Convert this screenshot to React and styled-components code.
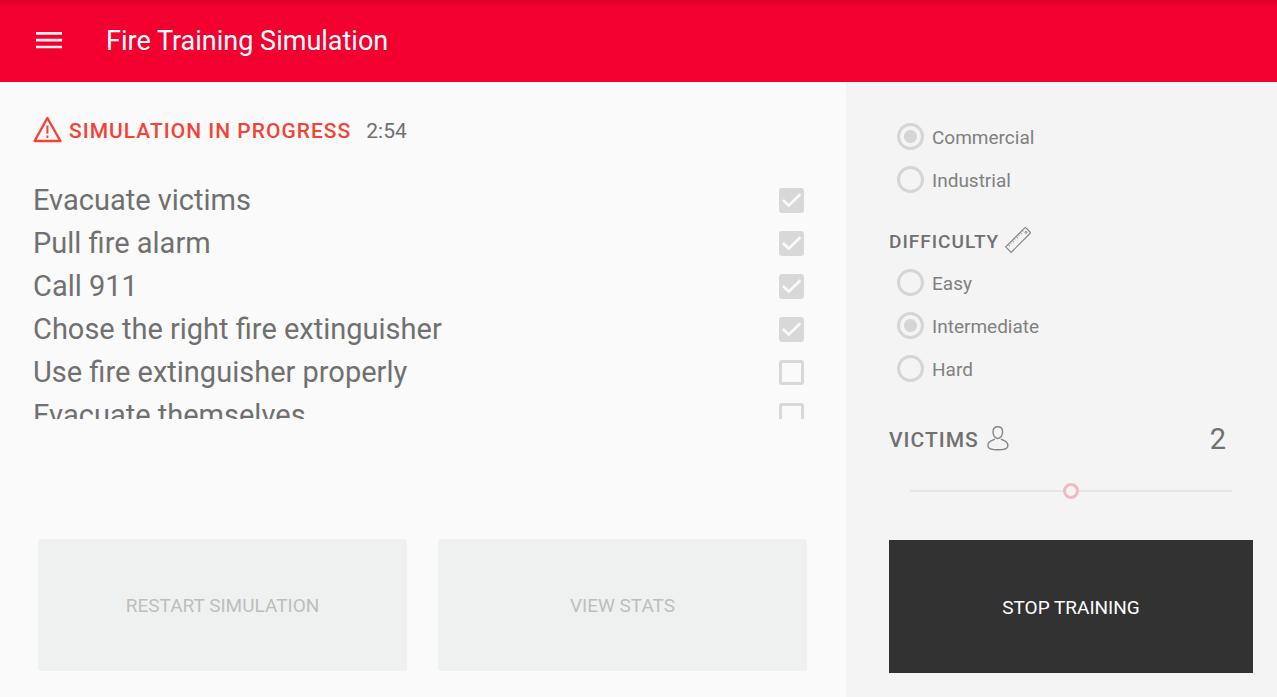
import React from "react";
import styled, { createGlobalStyle, css } from "styled-components";

const GlobalStyle = createGlobalStyle`
  *, *::before, *::after { box-sizing: border-box; }
  body {
    margin: 0;
    background: #fafafa;
    color: #707070;
    font-family: Roboto, "Liberation Sans", sans-serif;
  }
  button, input { font: inherit; margin: 0; }
`;

const Page = styled.div`
  display: flex;
  flex-direction: column;
  height: 100vh;
`;

const TopBar = styled.header`
  display: flex;
  align-items: center;
  flex: none;
  gap: 44px;
  height: 82px;
  padding: 0 36px;
  background: linear-gradient(#dc002b, #f2002f 6px);
  color: #fff;
`;

const MenuButton = styled.button`
  display: flex;
  padding: 0;
  border: 0;
  background: none;
  color: inherit;
  cursor: pointer;
`;

const Title = styled.h1`
  margin: 0;
  font-size: 27px;
  font-weight: 400;
  line-height: 32px;
`;

const Body = styled.div`
  display: flex;
  flex: 1;
  min-height: 0;
`;

const Main = styled.main`
  display: flex;
  flex-direction: column;
  flex: 1;
  min-width: 0;
  padding: 32px 39px 26px 33px;
`;

const Status = styled.div`
  display: flex;
  align-items: center;
  flex: none;
  height: 34px;
`;

const StatusText = styled.h2`
  margin: 0 15px 0 7px;
  color: #f44336;
  font-size: 21px;
  font-weight: 500;
  line-height: 32px;
  letter-spacing: 1px;
`;

const Timer = styled.span`
  font-size: 21px;
  line-height: 32px;
`;

const TaskList = styled.ul`
  flex: 1;
  min-height: 0;
  margin: 31px 0 120px;
  padding: 0 3px 0 0;
  list-style: none;
  overflow-y: auto;
  scrollbar-width: none;
`;

const TaskRow = styled.li`
  label {
    display: flex;
    align-items: center;
    justify-content: space-between;
    height: 43px;
    font-size: 29px;
    line-height: 43px;
  }
`;

const TickBox = styled.span`
  display: grid;
  width: 25px;
  height: 25px;
  svg { grid-area: 1 / 1; }
`;

const TickInput = styled.input`
  grid-area: 1 / 1;
  appearance: none;
  width: 25px;
  height: 25px;
  border: 3px solid #d8d8d8;
  border-radius: 3px;
  &:checked { background: #d8d8d8; }
`;

const Actions = styled.div`
  display: flex;
  flex: none;
  gap: 31px;
  padding-left: 5px;
`;

const ActionButton = styled.button`
  flex: 1;
  height: 132px;
  border: 0;
  border-radius: 3px;
  background: #eff1f0;
  color: #bcbebd;
  font-size: 19px;
  ${(p) => p.$dark && css`
    flex: none;
    height: 133px;
    margin-top: auto;
    padding-top: 2px;
    border-radius: 0;
    background: #323232;
    color: #fff;
  `}
`;

const Settings = styled.aside`
  display: flex;
  flex-direction: column;
  flex: none;
  width: 431px;
  padding: 33px 24px 24px 43px;
  background: #f4f4f4;
`;

const RadioGroup = styled.div`
  padding-left: 8px;
`;

const RadioLabel = styled.label`
  display: flex;
  align-items: center;
  gap: 8px;
  height: 43px;
  font-size: 19px;
  color: #808080;
`;

const RadioText = styled.span`
  padding-top: 2px;
`;

const RadioInput = styled.input`
  appearance: none;
  width: 27px;
  height: 27px;
  border: 3px solid #d5d5d5;
  border-radius: 50%;
  &:checked { background: radial-gradient(circle, #d5d5d5 6px, transparent 7px); }
`;

const SectionHead = styled.div`
  display: flex;
  align-items: center;
  gap: 6px;
  height: 34px;
  margin-top: ${(p) => p.$top}px;
  margin-bottom: 2px;
`;

const SectionTitle = styled.h3`
  margin: 0;
  font-size: ${(p) => (p.$large ? 21 : 19)}px;
  font-weight: 500;
  line-height: 32px;
  letter-spacing: 1px;
`;

const Count = styled.output`
  margin-left: auto;
  padding: 0 27px 2px 0;
  font-size: 29px;
  line-height: 32px;
`;

const Slider = styled.input`
  appearance: none;
  height: 16px;
  margin: 24px 21px 0;
  background: linear-gradient(#e4e4e4, #e4e4e4) center / 100% 2px no-repeat;
  &::-webkit-slider-thumb {
    appearance: none;
    width: 16px;
    height: 16px;
    border: 3px solid #ecbcc3;
    border-radius: 50%;
    background: #f4f4f4;
  }
`;

const MenuIcon = () => (
  <svg width="26" height="20" viewBox="0 0 26 20" aria-hidden="true">
    <path d="M0 2.300h26M0 9.200h26M0 16h26" stroke="currentColor" strokeWidth="2.700" opacity=".92" />
  </svg>
);

const WarningIcon = () => (
  <svg width="29" height="31" viewBox="0 0 29 31" fill="none" stroke="#f44336" aria-hidden="true">
    <path d="M14.4 2 27.4 25H1.6Z" strokeWidth="2.400" strokeLinejoin="round" />
    <path d="M14.4 9.5v8.3M14.4 19.6v2.4" strokeWidth="2" />
  </svg>
);

const RulerIcon = () => (
  <svg width="26" height="30" viewBox="1 0 26 30" fill="none" stroke="#858585" aria-hidden="true">
    <path d="M20.6 1.1Q21.4.3 22.2 1.1L26 5Q26.7 5.8 26 6.5L7.2 25.3 1.700 19.8Z" strokeWidth="1.2" />
    <circle cx="22" cy="5.4" r="1" strokeWidth="1" />
    <path d="m4.2 17.5 1.8 1.8m.2-3.8 1.2 1.2m.8-3.2 1.9 1.9m.1-3.9 1.2 1.2m.8-3.2 1.9 1.9m.1-3.9 1.2 1.2m.8-3.2 1.9 1.9m.1-3.9 1.2 1.2" strokeWidth="1" />
  </svg>
);

const PersonIcon = () => (
  <svg width="24" height="30" viewBox="-2 0 24 30" fill="none" stroke="#858585" strokeWidth="1.4" aria-hidden="true">
    <path d="M10.8 1.7C7.5 1.7 6 4 6 6.8c0 3.300 1.800 6.700 4.800 6.700s4.800-3.400 4.800-6.700c0-2.800-1.500-5.100-4.800-5.100Z" />
    <path d="M7.8 14C5.700 15.800 1 15.900 1 19.900v1.300C1 23.200 5 24.700 10.900 24.700s9.900-1.500 9.900-3.500v-1.300c0-4-4.700-4.100-6.800-5.900" />
  </svg>
);

const CheckMark = () => (
  <svg width="25" height="25" viewBox="0 0 25 25" aria-hidden="true">
    <path d="m4 12 5.700 5.700L21.300 6.200" fill="none" stroke="#fafafa" strokeWidth="2.700" />
  </svg>
);

const TASKS = [
  { text: "Evacuate victims", done: true },
  { text: "Pull fire alarm", done: true },
  { text: "Call 911", done: true },
  { text: "Chose the right fire extinguisher", done: true },
  { text: "Use fire extinguisher properly", done: false },
  { text: "Evacuate themselves", done: false },
];

function Task({ text, done }) {
  return (
    <TaskRow>
      <label>
        {text}
        <TickBox>
          <TickInput type="checkbox" defaultChecked={done} disabled />
          {done && <CheckMark />}
        </TickBox>
      </label>
    </TaskRow>
  );
}

function Radios({ name, label, options, value }) {
  return (
    <RadioGroup role="radiogroup" aria-label={label}>
      {options.map((option) => (
        <RadioLabel key={option}>
          <RadioInput type="radio" name={name} defaultChecked={option === value} disabled />
          <RadioText>{option}</RadioText>
        </RadioLabel>
      ))}
    </RadioGroup>
  );
}

export default function App() {
  return (
    <Page>
      <GlobalStyle />
      <TopBar>
        <MenuButton type="button" aria-label="Menu"><MenuIcon /></MenuButton>
        <Title>Fire Training Simulation</Title>
      </TopBar>
      <Body>
        <Main>
          <Status>
            <WarningIcon />
            <StatusText>SIMULATION IN PROGRESS</StatusText>
            <Timer>2:54</Timer>
          </Status>
          <TaskList>
            {TASKS.map((task) => <Task key={task.text} {...task} />)}
          </TaskList>
          <Actions>
            <ActionButton type="button" disabled>RESTART SIMULATION</ActionButton>
            <ActionButton type="button" disabled>VIEW STATS</ActionButton>
          </Actions>
        </Main>
        <Settings>
          <Radios name="building" label="Building" options={["Commercial", "Industrial"]} value="Commercial" />
          <SectionHead $top={24}>
            <SectionTitle>DIFFICULTY</SectionTitle>
            <RulerIcon />
          </SectionHead>
          <Radios name="difficulty" label="Difficulty" options={["Easy", "Intermediate", "Hard"]} value="Intermediate" />
          <SectionHead $top={33}>
            <SectionTitle $large id="victims">VICTIMS</SectionTitle>
            <PersonIcon />
            <Count>2</Count>
          </SectionHead>
          <Slider type="range" min="0" max="4" defaultValue="2" disabled aria-labelledby="victims" />
          <ActionButton type="button" $dark>STOP TRAINING</ActionButton>
        </Settings>
      </Body>
    </Page>
  );
}
